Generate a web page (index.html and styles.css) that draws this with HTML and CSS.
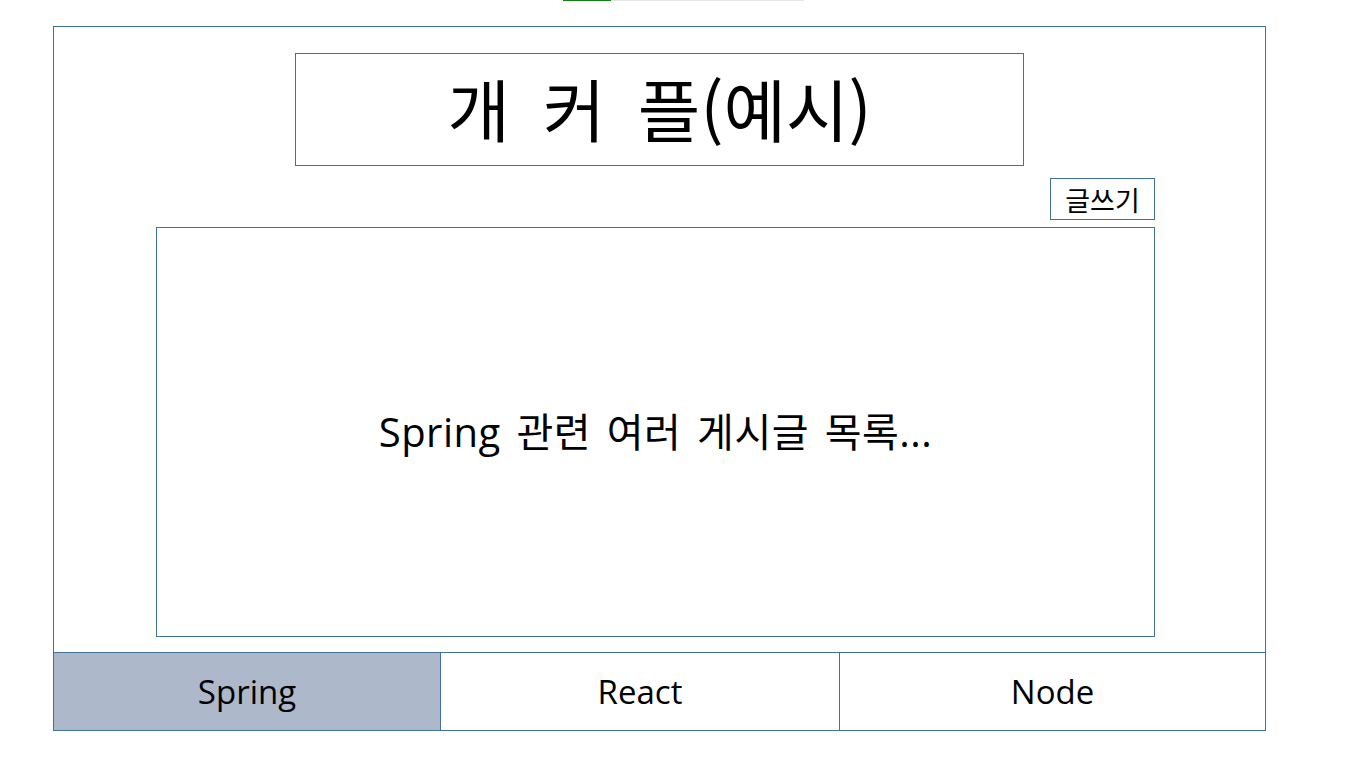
FILE: index.html
```html
<!DOCTYPE html>
<html lang="ko">
<head>
<meta charset="utf-8">
<title>개커플</title>
<link rel="stylesheet" href="styles.css">
</head>
<body>
<div class="loader"><span class="loader-done"></span><span class="loader-rest"></span></div>
<div class="frame">
  <header class="title-box"><h1 class="title">개 커 플(예시)</h1></header>
  <main class="board">
    <div class="toolbar"><button class="write-btn">글쓰기</button></div>
    <section class="list-box"><p class="list-text">Spring 관련 여러 게시글 목록...</p></section>
  </main>
  <nav class="tabs">
    <div class="tab tab-spring active">Spring</div>
    <div class="tab tab-react">React</div>
    <div class="tab tab-node">Node</div>
  </nav>
</div>
</body>
</html>
```
FILE: styles.css
```css
* { box-sizing: border-box; }
html, body { margin: 0; padding: 0; background: #fff; }
body {
  font-family: "Open Sans", "Noto Sans CJK KR", sans-serif;
  color: #000;
  width: 1366px;
  height: 768px;
  overflow: hidden;
}
.loader {
  display: flex;
  margin-left: 563px;
  width: 241px;
  height: 1px;
}
.loader-done { width: 48px; background: #108010; }
.loader-rest { flex: 1; background: #e6e6e6; }
.frame {
  margin-top: 25px;
  margin-left: 53px;
  width: 1213px;
  height: 705px;
  border: 1px solid #41719c;
  display: flex;
  flex-direction: column;
}
.title-box {
  margin: 26px auto 0;
  width: 729px;
  height: 113px;
  padding-bottom: 4px;
  border: 1px solid #41719c;
  display: flex;
  align-items: center;
  justify-content: center;
}
.title {
  margin: 0;
  font-family: "Noto Sans CJK KR", sans-serif;
  font-weight: 400;
  font-size: 68px;
  line-height: 1;
  letter-spacing: 0;
  word-spacing: 0.2em;
}
.board {
  margin-left: 102px;
  width: 999px;
  display: flex;
  flex-direction: column;
}
.toolbar {
  display: flex;
  justify-content: flex-end;
  margin-top: 12px;
}
.write-btn {
  width: 105px;
  height: 42px;
  border: 1px solid #41719c;
  background: #fff;
  font-family: "Noto Sans CJK KR", sans-serif;
  font-size: 27px;
  line-height: 1;
  padding: 0;
  color: #000;
}
.list-box {
  margin-top: 7px;
  height: 410px;
  border: 1px solid #41719c;
  display: flex;
  align-items: center;
  justify-content: center;
}
.list-text {
  margin: 0;
  font-family: "Open Sans", "Noto Sans CJK KR", sans-serif;
  font-size: 40px;
  line-height: 1;
  word-spacing: 0.12em;
  letter-spacing: 0.5px;
}
.tabs {
  margin-top: auto;
  height: 78px;
  border-top: 1px solid #41719c;
  display: flex;
}
.tab {
  display: flex;
  align-items: center;
  justify-content: center;
  font-size: 33px;
  font-family: "Open Sans", sans-serif;
}
.tab-spring { width: 387px; border-right: 1px solid #41719c; }
.tab-react { width: 399px; border-right: 1px solid #41719c; }
.tab-node { flex: 1; }
.tab.active { background: #adb9ca; }
```
